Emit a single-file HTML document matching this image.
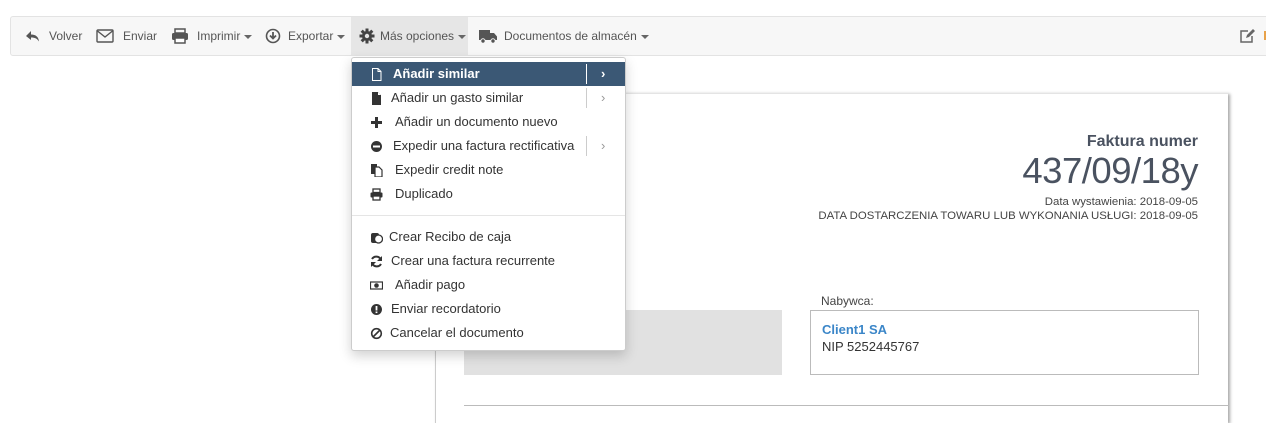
<!DOCTYPE html>
<html><head><meta charset="utf-8"><style>
*{box-sizing:border-box;margin:0;padding:0}
body{width:1266px;height:406px;overflow:hidden;background:#fff;font-family:"Liberation Sans",sans-serif;position:relative;color:#333}
.tb{position:absolute;left:10px;top:16px;width:1270px;height:40px;background:#f7f7f7;border:1px solid #e3e3e3;border-radius:3px}
.tbi{position:absolute;top:0;height:38px;line-height:38px;font-size:12px;color:#555;white-space:nowrap}
.tbi svg{position:absolute;top:11px}
.car{display:inline-block;width:0;height:0;border-left:4px solid transparent;border-right:4px solid transparent;border-top:4px solid #666;vertical-align:middle;margin-left:4px}
.paper{position:absolute;left:435px;top:93px;width:793px;height:330px;background:#fff;border-left:1px solid #ccc;border-top:1px solid #e4e4e4;box-shadow:2px 1px 3px rgba(0,0,0,.35)}
.menu{position:absolute;left:351px;top:57px;width:275px;height:294px;background:#fff;border:1px solid #ccc;border-radius:3px;box-shadow:0 5px 12px rgba(0,0,0,.18)}
.it{position:absolute;left:0;width:273px;height:24px;line-height:24px;font-size:13px;color:#333}
.it .ic{position:absolute;left:18px;top:6px;width:13px;height:13px}
.it .tx{position:absolute;top:0}
.sep{position:absolute;left:234px;top:2px;width:1px;height:20px;background:#ccc}
.chev{position:absolute;left:249px;top:0;color:#999;font-size:13px}
.hl{background:#3b5875;color:#fff}
.hl .sep{background:#fff}.hl .chev{color:#fff;font-weight:bold}
</style></head><body>
<div class="tb">
 <div class="tbi" style="left:14px"><svg width="16" height="16" viewBox="0 0 16 16" style="left:0"><path d="M6 3 L1 8 L6 12 V9.5 C10 9.5 12 10.5 14 13.5 C13.5 9 11 6.5 6 6.5Z" fill="#555"/></svg><span style="margin-left:24px">Volver</span></div>
 <div class="tbi" style="left:85px"><svg width="18" height="16" viewBox="0 0 18 16" style="left:0"><rect x="1" y="2" width="16" height="12" rx="1" fill="none" stroke="#555" stroke-width="1.4"/><path d="M1.5 3 L9 9 L16.5 3" fill="none" stroke="#555" stroke-width="1.4"/></svg><span style="margin-left:27px">Enviar</span></div>
 <div class="tbi" style="left:160px"><svg width="18" height="16" viewBox="0 0 18 16" style="left:0"><rect x="4" y="1" width="10" height="4" fill="none" stroke="#555" stroke-width="1.5"/><rect x="1" y="5" width="16" height="7" rx="1.5" fill="#555"/><rect x="4" y="10" width="10" height="5" fill="#fff" stroke="#555" stroke-width="1.5"/></svg><span style="margin-left:26px">Imprimir</span><span class="car"></span></div>
 <div class="tbi" style="left:254px"><svg width="16" height="16" viewBox="0 0 16 16" style="left:0"><circle cx="8" cy="8" r="6.5" fill="none" stroke="#555" stroke-width="1.6"/><path d="M8 4 V10 M5 7.5 L8 10.5 L11 7.5" fill="none" stroke="#555" stroke-width="1.8"/></svg><span style="margin-left:23px">Exportar</span><span class="car"></span></div>
 <div class="tbi" style="left:340px;width:117px;background:#e6e6e6;padding-left:9px"><svg width="16" height="16" viewBox="0 0 16 16" style="left:8px"><g fill="#444"><circle cx="8" cy="8" r="5"/><rect x="6.5" y="0.5" width="3" height="15"/><rect x="0.5" y="6.5" width="15" height="3"/><rect x="6.5" y="0.5" width="3" height="15" transform="rotate(45 8 8)"/><rect x="6.5" y="0.5" width="3" height="15" transform="rotate(-45 8 8)"/></g><circle cx="8" cy="8" r="2.2" fill="#e6e6e6"/></svg><span style="margin-left:20px">Más opciones</span><span class="car"></span></div>
 <div class="tbi" style="left:467px"><svg width="20" height="16" viewBox="0 0 20 16" style="left:0"><path d="M1 2 H12 V12 H1Z M12 5 H16 L19 8.5 V12 H12Z" fill="#555"/><circle cx="5" cy="13" r="2.2" fill="#555" stroke="#f7f7f7"/><circle cx="15" cy="13" r="2.2" fill="#555" stroke="#f7f7f7"/></svg><span style="margin-left:26px">Documentos de almacén</span><span class="car"></span></div>
 <div class="tbi" style="left:1228px"><svg width="18" height="16" viewBox="0 0 18 16" style="left:0"><path d="M9 3 H2 V14 H13 V8" fill="none" stroke="#666" stroke-width="1.5"/><path d="M7 10 L8 7 L14 1 L16 3 L10 9Z" fill="#666"/></svg></div>
 <div style="position:absolute;left:1253px;top:14px;width:3px;height:9px;background:#e8a24a"></div>
</div>

<div class="paper">
 <div style="position:absolute;right:30px;top:39px;font-size:16px;font-weight:bold;color:#4a5260">Faktura numer</div>
 <div style="position:absolute;right:30px;top:56px;font-size:36.5px;color:#4a5260;letter-spacing:-0.5px">437/09/18y</div>
 <div style="position:absolute;right:30px;top:101px;font-size:11.4px;color:#444;text-align:right;line-height:14px">Data wystawienia: 2018-09-05<br>DATA DOSTARCZENIA TOWARU LUB WYKONANIA USŁUGI: 2018-09-05</div>
 <div style="position:absolute;left:28px;top:216px;width:318px;height:65px;background:#e1e1e1"></div>
 <div style="position:absolute;left:385px;top:200px;font-size:12px;color:#444">Nabywca:</div>
 <div style="position:absolute;left:374px;top:216px;width:389px;height:65px;border:1px solid #bbb;padding:10px 11px">
  <div style="font-size:13px;font-weight:bold;color:#3b86c8;line-height:17px">Client1 SA</div>
  <div style="font-size:13px;color:#333;line-height:17px">NIP 5252445767</div>
 </div>
 <div style="position:absolute;left:28px;top:311px;width:765px;height:1px;background:#bbb"></div>
</div>

<div class="menu">
 <div class="it hl" style="top:4px"><svg class="ic" viewBox="0 0 13 13"><path d="M2.5 0.5 H8 L11 3.5 V12.5 H2.5Z M8 0.5 V3.5 H11" fill="none" stroke="#fff" stroke-width="1"/></svg><span class="tx" style="left:41px;font-weight:bold">Añadir similar</span><span class="sep"></span><span class="chev">›</span></div>
 <div class="it" style="top:28px"><svg class="ic" viewBox="0 0 13 13"><path d="M2 0 H8 L11 3 V13 H2Z" fill="#333"/><path d="M8 0 V3 H11" fill="#fff"/></svg><span class="tx" style="left:39px">Añadir un gasto similar</span><span class="sep"></span><span class="chev">›</span></div>
 <div class="it" style="top:52px"><svg class="ic" viewBox="0 0 13 13"><path d="M5 1 H8 V5 H12 V8 H8 V12 H5 V8 H1 V5 H5Z" fill="#333"/></svg><span class="tx" style="left:43px">Añadir un documento nuevo</span></div>
 <div class="it" style="top:76px"><svg class="ic" viewBox="0 0 13 13"><circle cx="6.5" cy="6.5" r="5.5" fill="#333"/><rect x="3" y="5.5" width="7" height="2" fill="#fff"/></svg><span class="tx" style="left:41px">Expedir una factura rectificativa</span><span class="sep"></span><span class="chev">›</span></div>
 <div class="it" style="top:100px"><svg class="ic" viewBox="0 0 13 13"><rect x="1" y="0" width="6" height="10" fill="#333"/><path d="M5 3 H9 L12 6 V13 H5Z" fill="#fff" stroke="#333" stroke-width="1.2"/></svg><span class="tx" style="left:43px">Expedir credit note</span></div>
 <div class="it" style="top:124px"><svg class="ic" viewBox="0 0 13 13"><rect x="3" y="1" width="7" height="3.5" fill="none" stroke="#333" stroke-width="1.3"/><rect x="0.5" y="4.5" width="12" height="5" rx="1" fill="#333"/><rect x="3" y="8" width="7" height="4" fill="#fff" stroke="#333" stroke-width="1.3"/></svg><span class="tx" style="left:43px">Duplicado</span></div>
 <div style="position:absolute;left:0;top:157px;width:273px;height:1px;background:#e5e5e5"></div>
 <div class="it" style="top:167px"><svg class="ic" viewBox="0 0 13 13"><rect x="1" y="2" width="8" height="10" rx="2" fill="#333"/><circle cx="8.5" cy="8" r="4" fill="#fff" stroke="#333" stroke-width="1.3"/></svg><span class="tx" style="left:37px">Crear Recibo de caja</span></div>
 <div class="it" style="top:191px"><svg class="ic" viewBox="0 0 13 13"><path d="M11 5 A5 5 0 0 0 2 4 M2 8 A5 5 0 0 0 11 9" fill="none" stroke="#333" stroke-width="2"/><path d="M12 1 V6 H7Z M1 12 V7 H6Z" fill="#333"/></svg><span class="tx" style="left:39px">Crear una factura recurrente</span></div>
 <div class="it" style="top:215px"><svg class="ic" viewBox="0 0 13 13"><rect x="0.5" y="3" width="12" height="7" fill="none" stroke="#333" stroke-width="1.2"/><circle cx="6.5" cy="6.5" r="2.3" fill="#333"/></svg><span class="tx" style="left:43px">Añadir pago</span></div>
 <div class="it" style="top:239px"><svg class="ic" viewBox="0 0 13 13"><circle cx="6.5" cy="6.5" r="5.5" fill="#333"/><rect x="5.6" y="3" width="1.8" height="4.5" fill="#fff"/><rect x="5.6" y="8.5" width="1.8" height="1.6" fill="#fff"/></svg><span class="tx" style="left:39px">Enviar recordatorio</span></div>
 <div class="it" style="top:263px"><svg class="ic" viewBox="0 0 13 13"><circle cx="6.5" cy="6.5" r="4.8" fill="none" stroke="#333" stroke-width="1.6"/><path d="M3 10 L10 3" stroke="#333" stroke-width="1.6"/></svg><span class="tx" style="left:38px">Cancelar el documento</span></div>
</div>
</body></html>
